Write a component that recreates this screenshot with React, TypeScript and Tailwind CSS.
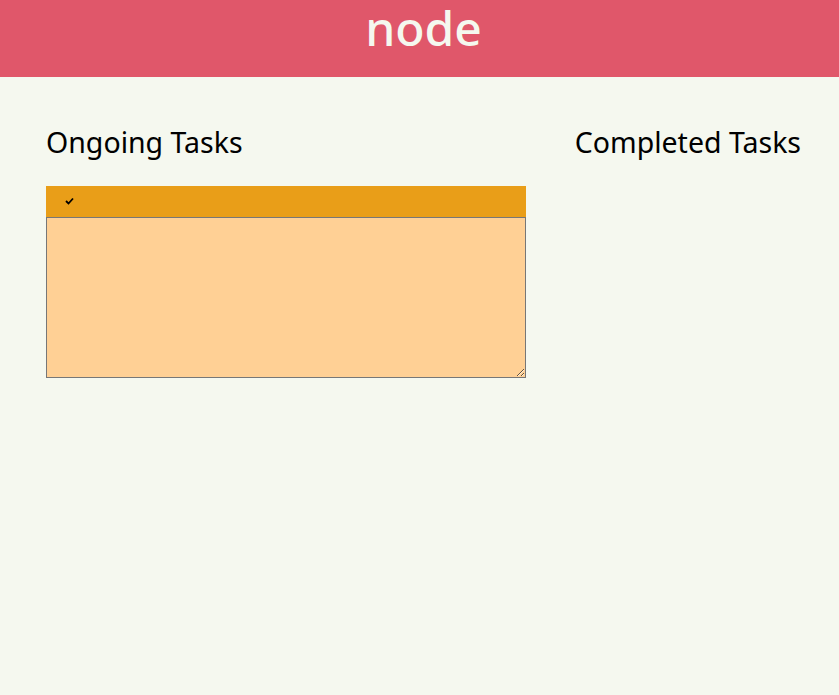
import React from "react";

export default function App() {
  return (
    <div className="min-h-[695px] bg-[#f5f8ef]" style={{ fontFamily: '"Comic Sans MS", "Noto Sans", sans-serif' }}>
      <header className="h-[77px] bg-[#e0576a] flex items-start justify-center">
        <h1 className="text-[48px] font-medium leading-[56px] text-[#f5f8ef] pl-[8px]">node</h1>
      </header>
      <main className="flex justify-between pl-[46px] pr-[38px] pt-[46px]">
        <section className="w-[480px]">
          <h2 className="text-[28.5px] leading-[38px] text-black">Ongoing Tasks</h2>
          <div className="mt-[25px]">
            <div className="h-[31px] bg-[#e99e18] flex items-center pl-[19px]">
              <svg width="9" height="8" viewBox="0 0 9 8" className="mt-[-2px]">
                <polyline points="1,4 3.5,6.5 8,1.5" fill="none" stroke="black" strokeWidth="1.8" />
              </svg>
            </div>
            <textarea className="block w-[480px] h-[161px] bg-[#ffd095] border border-[#777777] outline-none" />
          </div>
        </section>
        <section>
          <h2 className="text-[28.5px] leading-[38px] text-black">Completed Tasks</h2>
        </section>
      </main>
    </div>
  );
}
